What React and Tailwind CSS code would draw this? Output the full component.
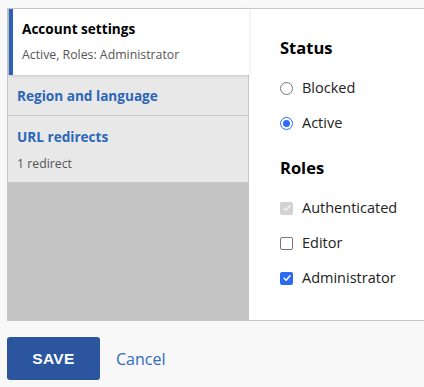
import React from 'react';

const font = { fontFamily: '"Open Sans", "DejaVu Sans", sans-serif' };

const Radio = ({ checked, label }) => (
    <label className="flex items-center h-[18px] gap-[9px] text-[14.5px] text-[#222]">
        <span className={`w-[13px] h-[13px] rounded-full border flex items-center justify-center bg-white ${checked ? 'border-[#2b6bf3]' : 'border-[#767676]'}`}>
            {checked && <span className="w-[7px] h-[7px] rounded-full bg-[#2b6bf3]" />}
        </span>
        {label}
    </label>
);

const Checkbox = ({ checked, disabled, label }) => (
    <label className="flex items-center h-[18px] gap-[9px] text-[14.5px] text-[#222]">
        <span className={`w-[13px] h-[13px] rounded-[2px] flex items-center justify-center ${disabled ? 'bg-[#d3d3d3]' : checked ? 'bg-[#2b6bf3]' : 'bg-white border border-[#767676]'}`}>
            {checked && (
                <svg viewBox="0 0 12 12" className="w-[10px] h-[10px]">
                    <path d="M2.5 6.2 L5 8.6 L9.6 3.4" fill="none" stroke={disabled ? '#f4f4f4' : 'white'} strokeWidth="1.8" strokeLinecap="round" strokeLinejoin="round" />
                </svg>
            )}
        </span>
        {label}
    </label>
);

export default function App() {
    return (
        <div className="min-h-screen bg-[#f8f8f8] pt-2 pl-[7px]" style={font}>
            {/* Vertical tabs box */}
            <div className="flex h-[313px] border-t border-b border-l border-[#c8c8c8]">
                <div className="w-[241px] flex flex-col bg-[#c4c4c4]">
                    <div className="relative z-10 h-[66px] ml-px bg-white border-l-4 border-[#2a63b8] pl-[9px] pt-[11px] shadow-[0_1px_3px_rgba(0,0,0,0.15)]">
                        <div className="text-[13.6px] font-bold text-black leading-[18px]">Account settings</div>
                        <div className="text-[12.3px] text-[#555] mt-[9px] leading-[16px]">Active, Roles: Administrator</div>
                    </div>
                    <div className="h-[41px] bg-[#e8e8e8] border-b border-r border-[#c8c8c8] pl-[9px] pt-[8px]">
                        <a className="text-[13.6px] font-bold text-[#2b66b8] leading-[18px]">Region and language</a>
                    </div>
                    <div className="h-[67px] bg-[#e8e8e8] border-b border-r border-[#c8c8c8] pl-[9px] pt-[12px]">
                        <a className="block text-[13.6px] font-bold text-[#2b66b8] leading-[18px]">URL redirects</a>
                        <div className="text-[12.3px] text-[#555] mt-[10px] leading-[16px]">1 redirect</div>
                    </div>
                </div>
                <div className="flex-1 bg-white pl-[31px] pt-[28px]">
                    <h3 className="text-[16.5px] font-bold text-black leading-[22px]">Status</h3>
                    <div className="mt-[20px] flex flex-col gap-[17px]">
                        <Radio label="Blocked" />
                        <Radio checked label="Active" />
                    </div>
                    <h3 className="mt-[25px] text-[16.5px] font-bold text-black leading-[22px]">Roles</h3>
                    <div className="mt-[20px] flex flex-col gap-[17px]">
                        <Checkbox checked disabled label="Authenticated" />
                        <Checkbox label="Editor" />
                        <Checkbox checked label="Administrator" />
                    </div>
                </div>
            </div>

            {/* Actions */}
            <div className="flex items-center gap-[16px] mt-[16px]">
                <button className="w-[93px] h-[43px] rounded-[3px] bg-[#2c55a0] text-white text-[15.5px] font-bold tracking-[0.3px]" style={{ fontFamily: '"Liberation Sans", Arial, sans-serif' }}>
                    SAVE
                </button>
                <a className="text-[16px] text-[#2f6bbf]">Cancel</a>
            </div>
        </div>
    );
}
